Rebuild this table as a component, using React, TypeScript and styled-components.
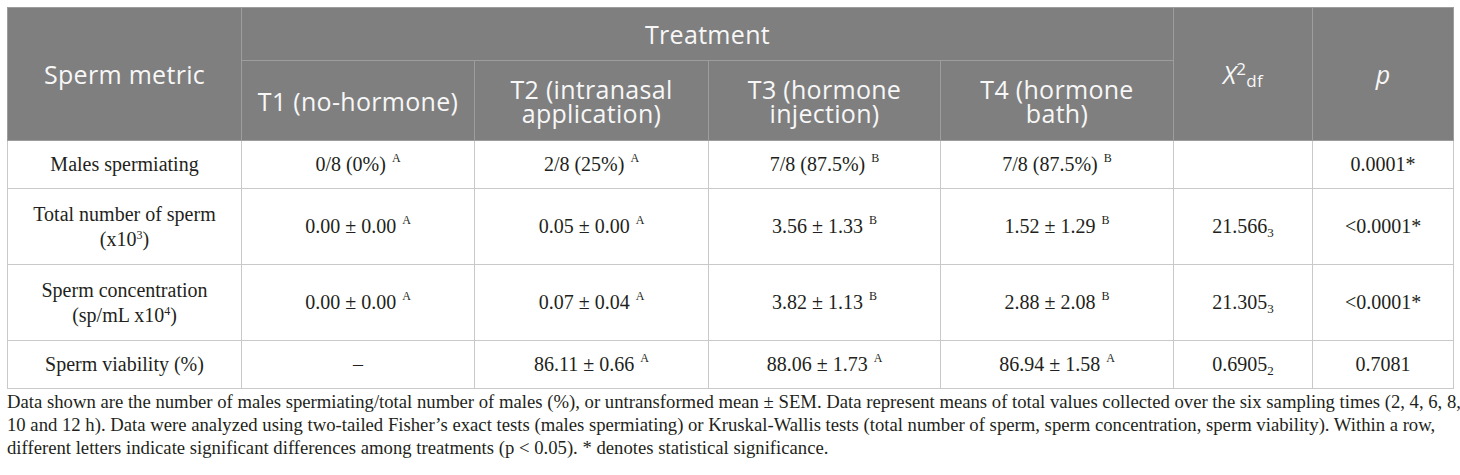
import React from "react";
import styled, { createGlobalStyle } from "styled-components";

// Global
const GlobalStyle = createGlobalStyle`
  body {
    margin: 0;
    background: #ffffff;
  }
`;

// Styles
const Page = styled.div`
  padding: 7px 7px 0;
  width: 1446px;
`;

const Table = styled.table`
  border-collapse: collapse;
  table-layout: fixed;
  width: 1446px;
  border: 1px solid #c4c4c4;
`;

const HeadRow = styled.tr<{ $h: number }>`
  height: ${(p) => p.$h}px;
`;

const BodyRow = styled.tr<{ $h: number }>`
  height: ${(p) => p.$h}px;
`;

const HeadCell = styled.th`
  background: #7f7f7f;
  color: #f7f7f7;
  font-family: "Open Sans", "DejaVu Sans", sans-serif;
  font-weight: 400;
  font-size: 25px;
  line-height: 24px;
  letter-spacing: 0.3px;
  text-align: center;
  vertical-align: middle;
  border: 1px solid #9d9d9d;
  padding: 0 10px;
`;

const Cell = styled.td`
  font-family: "Liberation Serif", "Times New Roman", serif;
  font-size: 20px;
  line-height: 25px;
  color: #231f20;
  text-align: center;
  vertical-align: middle;
  border: 1px solid #c9c9c9;
  padding: 0 14px;
`;

const Letter = styled.sup`
  font-size: 12px;
  vertical-align: 9px;
  line-height: 0;
  margin-left: 6px;
`;

const Power = styled.sup`
  font-size: 12px;
  vertical-align: 7px;
  line-height: 0;
`;

const Df = styled.sub`
  font-size: 13px;
  vertical-align: -4px;
  line-height: 0;
`;

const HeadSup = styled.sup`
  font-size: 17px;
  vertical-align: 9px;
  line-height: 0;
  font-style: normal;
`;

const HeadSub = styled.sub`
  font-size: 17px;
  vertical-align: -3px;
  line-height: 0;
`;

const Ital = styled.i`
  font-style: italic;
`;

const Note = styled.p`
  margin: 1px 0 0;
  font-family: "Liberation Serif", "Times New Roman", serif;
  font-size: 18.7px;
  line-height: 23px;
  color: #231f20;
  white-space: nowrap;
`;

// Data
const widths = [234, 233, 234, 232, 233, 139, 141];

type Row = {
  metric: React.ReactNode;
  values: [string, string?][];
  chi: React.ReactNode;
  p: string;
  h: number;
};

const rows: Row[] = [
  {
    metric: "Males spermiating",
    values: [
      ["0/8 (0%)", "A"],
      ["2/8 (25%)", "A"],
      ["7/8 (87.5%)", "B"],
      ["7/8 (87.5%)", "B"],
    ],
    chi: "",
    p: "0.0001*",
    h: 48,
  },
  {
    metric: (
      <>
        Total number of sperm (x10<Power>3</Power>)
      </>
    ),
    values: [
      ["0.00 ± 0.00", "A"],
      ["0.05 ± 0.00", "A"],
      ["3.56 ± 1.33", "B"],
      ["1.52 ± 1.29", "B"],
    ],
    chi: (
      <>
        21.566<Df>3</Df>
      </>
    ),
    p: "<0.0001*",
    h: 76,
  },
  {
    metric: (
      <>
        Sperm concentration (sp/mL x10<Power>4</Power>)
      </>
    ),
    values: [
      ["0.00 ± 0.00", "A"],
      ["0.07 ± 0.04", "A"],
      ["3.82 ± 1.13", "B"],
      ["2.88 ± 2.08", "B"],
    ],
    chi: (
      <>
        21.305<Df>3</Df>
      </>
    ),
    p: "<0.0001*",
    h: 76,
  },
  {
    metric: "Sperm viability (%)",
    values: [
      ["–"],
      ["86.11 ± 0.66", "A"],
      ["88.06 ± 1.73", "A"],
      ["86.94 ± 1.58", "A"],
    ],
    chi: (
      <>
        0.6905<Df>2</Df>
      </>
    ),
    p: "0.7081",
    h: 48,
  },
];

const App: React.FC = () => {
  return (
    <Page>
      <GlobalStyle />
      <Table>
        <colgroup>
          {widths.map((w, i) => (
            <col key={i} style={{ width: w }} />
          ))}
        </colgroup>
        <thead>
          <HeadRow $h={53}>
            <HeadCell rowSpan={2}>Sperm metric</HeadCell>
            <HeadCell colSpan={4}>Treatment</HeadCell>
            <HeadCell rowSpan={2}>
              <Ital>X</Ital>
              <HeadSup>2</HeadSup>
              <HeadSub>df</HeadSub>
            </HeadCell>
            <HeadCell rowSpan={2}>
              <Ital>p</Ital>
            </HeadCell>
          </HeadRow>
          <HeadRow $h={80}>
            <HeadCell>T1 (no-hormone)</HeadCell>
            <HeadCell>T2 (intranasal application)</HeadCell>
            <HeadCell>T3 (hormone injection)</HeadCell>
            <HeadCell>T4 (hormone bath)</HeadCell>
          </HeadRow>
        </thead>
        <tbody>
          {rows.map((r, i) => (
            <BodyRow key={i} $h={r.h}>
              <Cell>{r.metric}</Cell>
              {r.values.map(([v, l], j) => (
                <Cell key={j}>
                  {v}
                  {l && <Letter>{l}</Letter>}
                </Cell>
              ))}
              <Cell>{r.chi}</Cell>
              <Cell>{r.p}</Cell>
            </BodyRow>
          ))}
        </tbody>
      </Table>
      <Note>
        Data shown are the number of males spermiating/total number of males (%), or untransformed mean ± SEM. Data represent means of total values collected over the six sampling times (2, 4, 6, 8,
        <br />
        10 and 12 h). Data were analyzed using two-tailed Fisher’s exact tests (males spermiating) or Kruskal-Wallis tests (total number of sperm, sperm concentration, sperm viability). Within a row,
        <br />
        different letters indicate significant differences among treatments (p &lt; 0.05). * denotes statistical significance.
      </Note>
    </Page>
  );
};

export default App;
